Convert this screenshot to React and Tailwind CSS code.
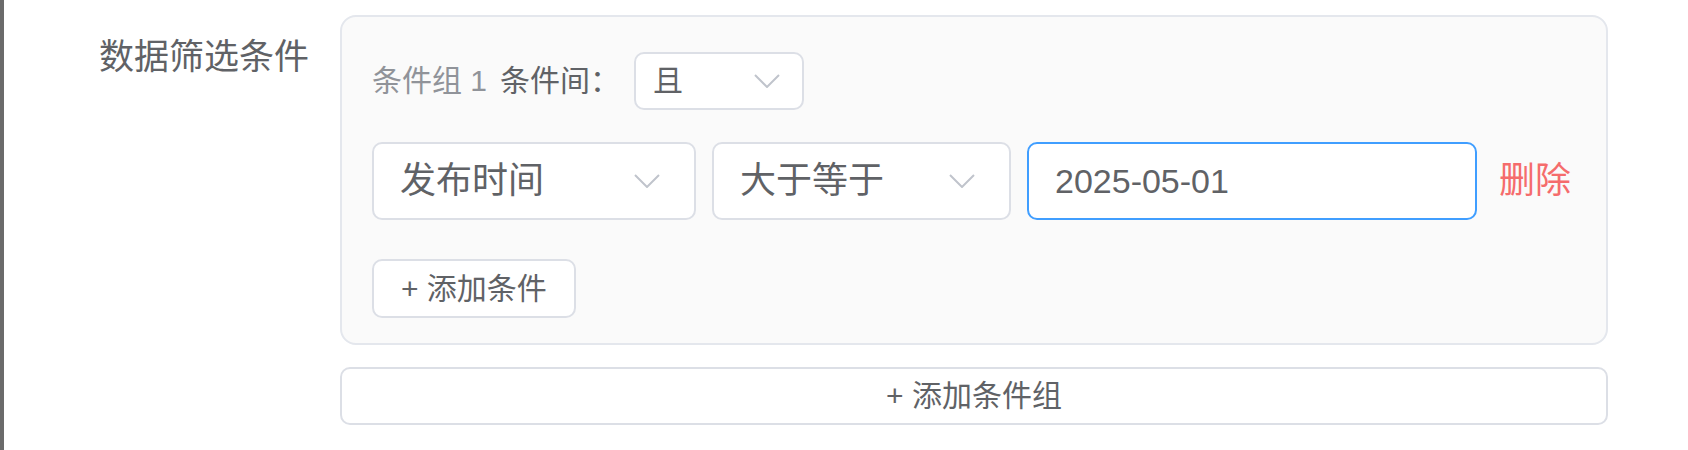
import React from 'react';

const font = { fontFamily: '"Liberation Sans", "Noto Sans CJK SC", sans-serif' };

function Chevron() {
  return (
    <svg width="26" height="14" viewBox="0 0 26 14" fill="none" className="shrink-0">
      <polyline points="1,1 13,13 25,1" stroke="#c0c4cc" strokeWidth="2" />
    </svg>
  );
}

function Select({ value, className, size = 'lg' }) {
  return (
    <div
      className={
        'flex items-center justify-between bg-white border-2 border-[#dcdfe6] rounded-[10px] ' +
        (size === 'lg' ? 'h-[78px] pl-[26px] pr-[34px] text-[36px]' : 'h-[58px] pl-[17px] pr-[22px] text-[30px]') +
        ' ' + className
      }
    >
      <span className="text-[#606266] leading-none">{value}</span>
      <Chevron />
    </div>
  );
}

export default function App() {
  return (
    <div className="w-full h-[450px] bg-white border-l-4 border-[#6b6b6b] flex" style={font}>
      {/* label column */}
      <div className="w-[336px] shrink-0 pr-[31px] pt-[39px] text-right">
        <span className="text-[35px] leading-[35px] text-[#606266]">数据筛选条件</span>
      </div>

      <div className="w-[1268px] pt-[15px]">
        {/* condition group */}
        <div className="border-2 border-[#e4e7ed] rounded-[16px] bg-[#fafafa] pl-[30px] pt-[35px] pb-[25px]">
          <div className="flex items-center h-[58px]">
            <span className="text-[30px] text-[#909399] leading-none">条件组 1</span>
            <span className="text-[30px] text-[#606266] leading-none ml-[13px]">条件间：</span>
            <Select value="且" size="sm" className="w-[170px] ml-[14px]" />
          </div>

          <div className="flex items-center mt-[32px]">
            <Select value="发布时间" className="w-[324px]" />
            <Select value="大于等于" className="w-[299px] ml-[16px]" />
            <div className="w-[450px] h-[78px] ml-[16px] bg-white border-2 border-[#409eff] rounded-[10px] flex items-center pl-[26px]">
              <span className="text-[34px] text-[#606266] leading-none">2025-05-01</span>
            </div>
            <button className="ml-[22px] text-[36px] text-[#f56c6c] leading-none">删除</button>
          </div>

          <button className="mt-[39px] w-[204px] h-[59px] bg-white border-2 border-[#dcdfe6] rounded-[10px] flex items-center pl-[27px] text-[30px] text-[#606266] leading-none">
            + 添加条件
          </button>
        </div>

        <button className="mt-[22px] w-full h-[58px] bg-white border-2 border-[#dcdfe6] rounded-[10px] flex items-center justify-center text-[30px] text-[#606266] leading-none">
          + 添加条件组
        </button>
      </div>
    </div>
  );
}
